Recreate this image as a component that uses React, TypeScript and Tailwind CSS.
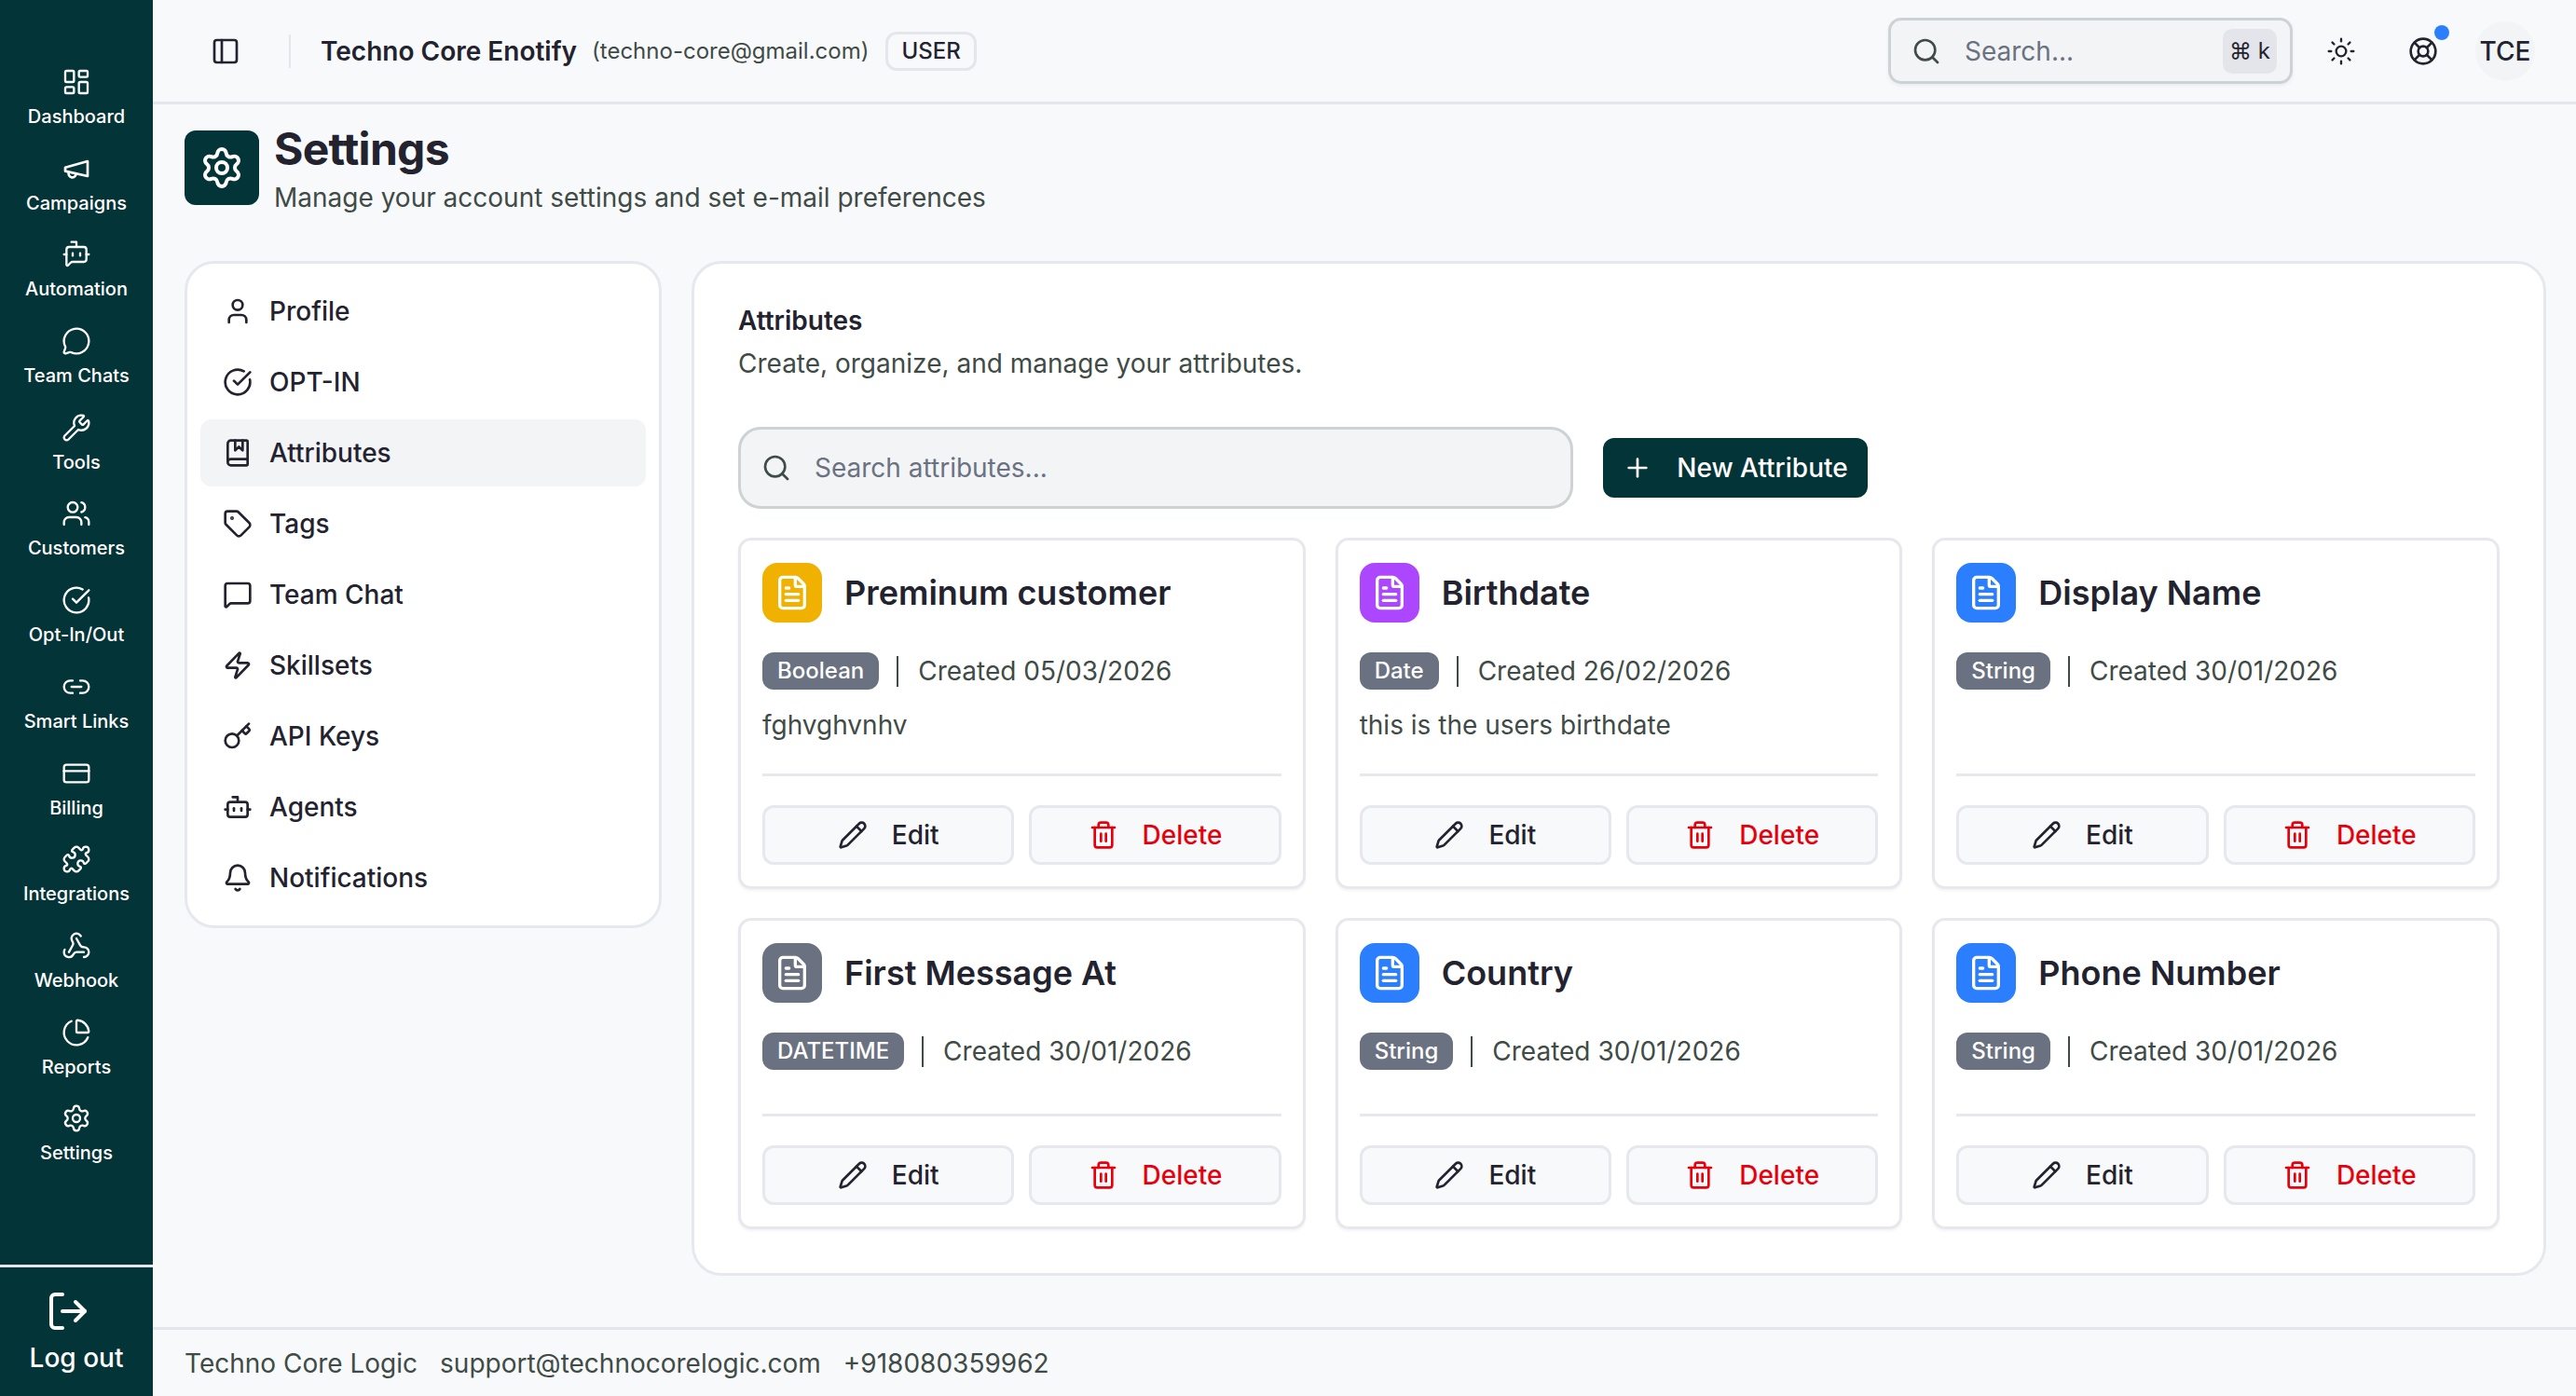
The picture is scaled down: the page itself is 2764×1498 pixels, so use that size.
import {
  LayoutDashboard, Bot, BotMessageSquare, MessageCircle, Wrench, Users, CircleCheckBig, Link2, CreditCard, Puzzle,
  Webhook, ChartPie, Settings, LogOut, PanelLeft, Search, Sun, LifeBuoy, User, BookMarked, Tag,
  MessageSquare, Zap, Key, Bell, Plus, FileText, Pencil, Trash2,
} from 'lucide-react';
import { clsx } from 'clsx';

// lucide's current megaphone has a different shape, this is the older one
function Megaphone({ className }: { className?: string }) {
  return (
    <svg viewBox="0 0 24 24" fill="none" stroke="currentColor" strokeWidth="2" strokeLinecap="round" strokeLinejoin="round" className={className}>
      <path d="m3 11 18-5v12L3 14v-3z" />
      <path d="M11.6 16.8a3 3 0 1 1-5.8-1.6" />
    </svg>
  );
}

const sideItems = [
  { icon: LayoutDashboard, label: 'Dashboard' },
  { icon: Megaphone, label: 'Campaigns' },
  { icon: BotMessageSquare, label: 'Automation' },
  { icon: MessageCircle, label: 'Team Chats' },
  { icon: Wrench, label: 'Tools' },
  { icon: Users, label: 'Customers' },
  { icon: CircleCheckBig, label: 'Opt-In/Out' },
  { icon: Link2, label: 'Smart Links' },
  { icon: CreditCard, label: 'Billing' },
  { icon: Puzzle, label: 'Integrations' },
  { icon: Webhook, label: 'Webhook' },
  { icon: ChartPie, label: 'Reports' },
  { icon: Settings, label: 'Settings' },
];

const settingsItems = [
  { icon: User, label: 'Profile' },
  { icon: CircleCheckBig, label: 'OPT-IN' },
  { icon: BookMarked, label: 'Attributes', active: true },
  { icon: Tag, label: 'Tags' },
  { icon: MessageSquare, label: 'Team Chat' },
  { icon: Zap, label: 'Skillsets' },
  { icon: Key, label: 'API Keys' },
  { icon: Bot, label: 'Agents' },
  { icon: Bell, label: 'Notifications' },
];

const attributes = [
  { name: 'Preminum customer', type: 'Boolean', created: '05/03/2026', desc: 'fghvghvnhv', color: 'bg-yellow-500' },
  { name: 'Birthdate', type: 'Date', created: '26/02/2026', desc: 'this is the users birthdate', color: 'bg-purple-500' },
  { name: 'Display Name', type: 'String', created: '30/01/2026', color: 'bg-blue-500' },
  { name: 'First Message At', type: 'DATETIME', created: '30/01/2026', color: 'bg-gray-500' },
  { name: 'Country', type: 'String', created: '30/01/2026', color: 'bg-blue-500' },
  { name: 'Phone Number', type: 'String', created: '30/01/2026', color: 'bg-blue-500' },
];

function AttributeCard({ attr }: { attr: (typeof attributes)[number] }) {
  return (
    <div className="flex flex-col rounded-[14px] border-[3px] border-[#e7e8ee] bg-white px-[23px] pt-[24px] pb-[23px] shadow-[0_2px_3px_rgba(0,0,0,0.05)]">
      <div className="flex items-center gap-[24px]">
        <div className={clsx('flex h-[64px] w-[64px] items-center justify-center rounded-[16px] text-white', attr.color)}>
          <FileText className="h-10 w-10" />
        </div>
        <span className="text-[36px] font-semibold text-[#23232f]">{attr.name}</span>
      </div>
      <div className="mt-[32px] flex h-[40px] items-center">
        <span className="flex h-[40px] items-center rounded-[12px] bg-gray-500 px-[16px] text-[24px] font-medium text-white">{attr.type}</span>
        <span className="mr-[21px] ml-[19px] h-[33px] w-[2px] bg-[#3f4b46]" />
        <span className="text-[28px] text-[#3f4b46]">Created {attr.created}</span>
      </div>
      {attr.desc && (
        <p className="mt-[18px] -mb-[15px] text-[28px] leading-[40px] text-[#3f4b46]">{attr.desc}</p>
      )}
      <div className="mt-auto pt-[47px]">
        <div className="h-[3px] bg-[#e7e8ee]" />
        <div className="mt-[31px] grid grid-cols-2 gap-[16px]">
          <button className="flex h-[64px] items-center justify-center gap-[26px] rounded-[12px] border-[3px] border-[#e7e8ee] bg-[#f8f9fb] text-[28px] font-medium text-[#23232f]">
            <Pencil className="h-8 w-8" />
            Edit
          </button>
          <button className="flex h-[64px] items-center justify-center gap-[26px] rounded-[12px] border-[3px] border-[#e7e8ee] bg-[#f8f9fb] text-[28px] font-medium text-red-600">
            <Trash2 className="h-8 w-8" />
            Delete
          </button>
        </div>
      </div>
    </div>
  );
}

export default function App() {
  return (
    <div className="flex h-screen w-screen overflow-hidden bg-[#f8f9fb] font-[Inter,sans-serif] text-[#23232f]">
      {/* Sidebar */}
      <aside className="flex w-[164px] shrink-0 flex-col bg-[#033438] text-white">
        <nav className="flex-1 pt-[72px]">
          {sideItems.map((item) => {
            const Icon = item.icon;
            return (
              <div key={item.label} className="flex h-[92.7px] flex-col items-center">
                <Icon className="h-8 w-8" strokeWidth={1.75} />
                <span className="mt-[7px] text-[20px] leading-[28px] font-medium">{item.label}</span>
              </div>
            );
          })}
        </nav>
        <div className="flex h-[141px] flex-col items-center border-t-[3px] border-[#e5e6ec] pt-[23px]">
          <LogOut className="mr-[18px] h-12 w-12" />
          <span className="mt-[6px] text-[28px] leading-[40px] font-medium">Log out</span>
        </div>
      </aside>

      <div className="flex min-w-0 flex-1 flex-col">
        {/* Top bar */}
        <header className="flex h-[112px] shrink-0 items-center border-b-[3px] border-[#e5e6ec] pr-[44px] pl-[62px]">
          <PanelLeft className="h-8 w-8" />
          <div className="mr-[32px] ml-[52px] h-[36px] w-[2px] bg-[#e5e6ec]" />
          <span className="text-[28px] font-semibold">Techno Core Enotify</span>
          <span className="ml-[16px] text-[24px] text-[#3f4b46]">(techno-core@gmail.com)</span>
          <span className="ml-[18px] flex h-[42px] items-center rounded-[12px] border-[3px] border-[#e5e6ec] px-[14px] text-[24px] font-medium">USER</span>

          <div className="ml-auto flex h-[71px] w-[434px] items-center rounded-[14px] border-[3px] border-[#cdd2d4] bg-[#f3f4f6] pr-[14px] pl-[22px] shadow-[0_2px_4px_rgba(0,0,0,0.06)]">
            <Search className="h-8 w-8 text-[#3f4b46]" />
            <span className="ml-[25px] text-[28px] text-gray-500">Search...</span>
            <span className="ml-auto flex h-[48px] w-[58px] items-center justify-center rounded-[10px] bg-[#e4e5eb] text-[24px]">⌘ k</span>
          </div>
          <Sun className="ml-[36px] h-8 w-8" strokeWidth={1.75} />
          <div className="relative ml-[56px]">
            <LifeBuoy className="h-8 w-8" />
            <span className="absolute -top-[12px] -right-[12px] h-[16px] w-[16px] rounded-full bg-blue-500" />
          </div>
          <div className="ml-[40px] flex h-[64px] w-[64px] items-center justify-center rounded-full bg-[#f3f4f6] text-[28px] font-medium">TCE</div>
        </header>

        <main className="flex-1 pt-[28px] pr-[32px] pl-[34px]">
          {/* Page title */}
          <div className="flex h-[80px] items-start gap-[16px]">
            <div className="flex h-[80px] w-[80px] items-center justify-center rounded-[12px] bg-[#033438] text-white">
              <Settings className="h-12 w-12" />
            </div>
            <div className="-mt-[6px]">
              <h1 className="text-[48px] leading-[52px] font-bold tracking-[-0.015em]">Settings</h1>
              <p className="mt-[6px] text-[28px] leading-[40px] text-[#3f4b46]">Manage your account settings and set e-mail preferences</p>
            </div>
          </div>

          <div className="mt-[60px] flex items-start gap-[32px]">
            {/* Settings menu */}
            <div className="flex w-[512px] shrink-0 flex-col gap-[4px] rounded-[32px] border-[3px] border-[#e7e8ee] bg-white px-[14px] py-[15px]">
              {settingsItems.map((item) => {
                const Icon = item.icon;
                return (
                  <div
                    key={item.label}
                    className={clsx(
                      'flex h-[72px] items-center gap-[18px] rounded-[12px] px-[24px] text-[28px] font-medium',
                      item.active && 'bg-[#f3f4f6]'
                    )}
                  >
                    <Icon className="h-8 w-8" />
                    {item.label}
                  </div>
                );
              })}
            </div>

            {/* Attributes panel */}
            <section className="flex-1 rounded-[32px] border-[3px] border-[#e7e8ee] bg-white px-[47px] pt-[41px] pb-[47px]">
              <h2 className="text-[28px] leading-[40px] font-semibold">Attributes</h2>
              <p className="mt-[6px] text-[28px] leading-[40px] text-[#3f4b46]">Create, organize, and manage your attributes.</p>

              <div className="mt-[48px] flex items-center gap-[32px]">
                <div className="flex h-[88px] w-[896px] items-center rounded-[24px] border-[3px] border-[#cdd2d4] bg-[#f3f4f6] px-[22px]">
                  <Search className="h-8 w-8 text-[#3f4b46]" />
                  <span className="ml-[25px] text-[28px] text-gray-500">Search attributes...</span>
                </div>
                <button className="flex h-[64px] w-[284px] items-center justify-center gap-[26px] rounded-[12px] bg-[#033438] text-[28px] font-medium text-white">
                  <Plus className="h-8 w-8" />
                  New Attribute
                </button>
              </div>

              <div className="mt-[31px] grid grid-cols-3 gap-x-[32px] gap-y-[31px]">
                {attributes.map((attr) => (
                  <AttributeCard key={attr.name} attr={attr} />
                ))}
              </div>
            </section>
          </div>
        </main>

        {/* Footer */}
        <footer className="flex h-[74px] shrink-0 items-center gap-[24px] border-t-[3px] border-[#e5e6ec] pl-[34px] text-[28px] text-[#3f4b46]">
          <span>Techno Core Logic</span>
          <span>support@technocorelogic.com</span>
          <span>+918080359962</span>
        </footer>
      </div>
    </div>
  );
}
